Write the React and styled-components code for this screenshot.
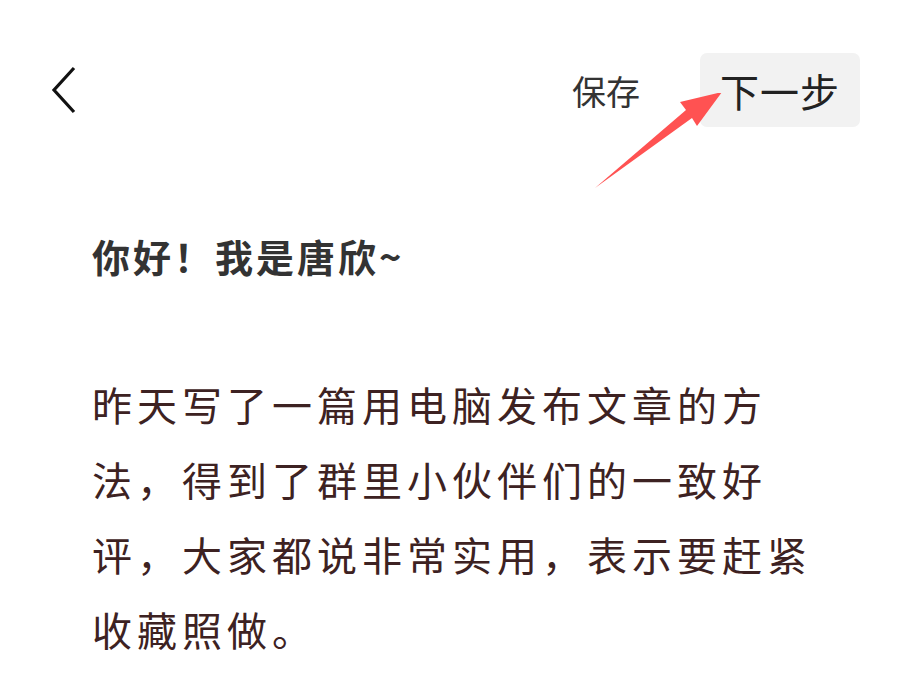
import React from "react";
import styled, { createGlobalStyle } from "styled-components";

const GlobalStyle = createGlobalStyle`
  html, body {
    margin: 0;
    padding: 0;
    background: #fff;
  }
  body {
    font-family: "Noto Sans CJK SC", "Noto Sans", sans-serif;
  }
`;

const Page = styled.div`
  width: 900px;
  height: 676px;
  overflow: hidden;
  background: #fff;
`;

const Header = styled.header`
  position: relative;
  display: flex;
  align-items: center;
  justify-content: space-between;
  height: 74px;
  margin-top: 53px;
  padding: 0 40px 0 50px;
`;

const BackBtn = styled.button`
  display: flex;
  align-items: center;
  padding: 0;
  border: none;
  background: none;
  color: #111;
`;

const Actions = styled.div`
  display: flex;
  align-items: center;
  gap: 60px;
  height: 100%;
`;

const SaveBtn = styled.button`
  padding: 0;
  border: none;
  background: none;
  font-family: inherit;
  font-size: 34px;
  color: #333;
`;

const NextBtn = styled.button`
  height: 100%;
  width: 160px;
  border: none;
  border-radius: 7px;
  background: #f2f2f2;
  font-family: inherit;
  font-size: 39px;
  color: #222;
  letter-spacing: 1px;
`;

const Pointer = styled.svg`
  position: absolute;
  left: 590px;
  top: 40px;
  pointer-events: none;
`;

const Article = styled.article`
  padding: 0 70px 0 92px;
`;

const Title = styled.h1`
  margin: 104px 0 0;
  font-size: 38px;
  line-height: 50px;
  font-weight: 700;
  letter-spacing: 3px;
  color: #333;
`;

const Paragraph = styled.p`
  margin: 86px 0 0;
  font-size: 40px;
  line-height: 75px;
  letter-spacing: 5px;
  color: #3d2222;
`;

const App = () => {
  return (
    <Page>
      <GlobalStyle />
      <Header>
        <BackBtn type="button">
          <svg width="28" height="48" viewBox="0 0 28 48">
            <polyline points="24,2 4,24 24,46" fill="none" stroke="currentColor" strokeWidth="3.2" />
          </svg>
        </BackBtn>
        <Actions>
          <SaveBtn type="button">保存</SaveBtn>
          <NextBtn type="button">下一步</NextBtn>
        </Actions>
        <Pointer width="140" height="100" viewBox="0 0 140 100">
          <polygon points="5,102 96,24 90,16 132,6 107,40 102,32" fill="#ff5252" transform="translate(0,-7)" />
        </Pointer>
      </Header>
      <Article>
        <Title>你好！我是唐欣~</Title>
        <Paragraph>
          昨天写了一篇用电脑发布文章的方法，得到了群里小伙伴们的一致好评，大家都说非常实用，表示要赶紧收藏照做。
        </Paragraph>
      </Article>
    </Page>
  );
};

export default App;
